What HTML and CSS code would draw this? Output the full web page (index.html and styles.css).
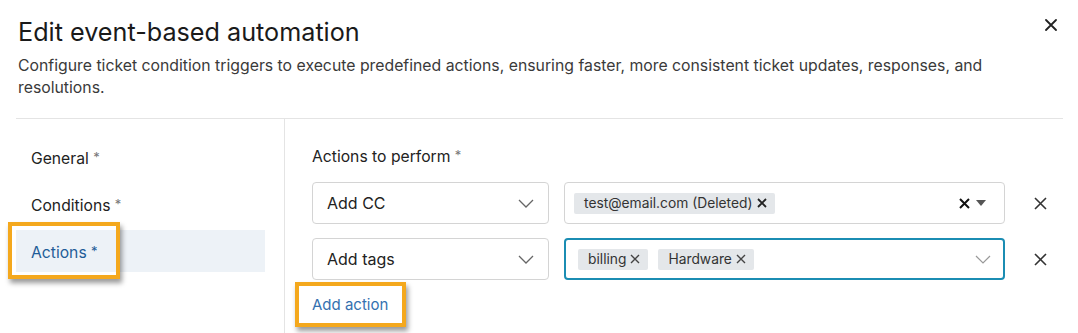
FILE: index.html
```html
<!DOCTYPE html>
<html lang="en">
<head>
    <meta charset="UTF-8">
    <meta name="viewport" content="width=device-width, initial-scale=1.0">
    <title>Edit event-based automation</title>
    <link rel="stylesheet" href="styles.css">
</head>
<body>
    <div class="modal">
        <div class="modal-header">
            <h1 class="modal-title">Edit event-based automation</h1>
            <button class="close-btn" aria-label="Close">
                <svg width="12" height="12" viewBox="0 0 12 12"><path d="M1 1L11 11M11 1L1 11" stroke="#222" stroke-width="1.8" stroke-linecap="round"/></svg>
            </button>
        </div>
        <p class="modal-desc">Configure ticket condition triggers to execute predefined actions, ensuring faster, more consistent ticket updates, responses, and resolutions.</p>

        <div class="modal-body">
            <nav class="sidebar">
                <div class="nav-item">General <span class="req">*</span></div>
                <div class="nav-item">Conditions <span class="req">*</span></div>
                <div class="nav-item active">
                    Actions <span class="req">*</span>
                    <span class="highlight"></span>
                </div>
            </nav>

            <section class="content">
                <div class="field-label">Actions to perform <span class="req">*</span></div>

                <div class="action-row">
                    <div class="select">
                        <span>Add CC</span>
                        <svg class="chevron" width="16" height="9" viewBox="0 0 16 9"><path d="M1 1L8 8L15 1" fill="none" stroke="#666" stroke-width="1.3"/></svg>
                    </div>
                    <div class="multi">
                        <div class="chips">
                            <span class="chip">test@email.com (Deleted)
                                <svg width="10" height="10" viewBox="0 0 10 10"><path d="M1 1L9 9M9 1L1 9" stroke="#222" stroke-width="1.8"/></svg>
                            </span>
                        </div>
                        <div class="multi-tools">
                            <svg width="11" height="11" viewBox="0 0 11 11"><path d="M1 1L10 10M10 1L1 10" stroke="#111" stroke-width="2"/></svg>
                            <svg width="10" height="6" viewBox="0 0 10 6"><path d="M0 0H10L5 6Z" fill="#555"/></svg>
                        </div>
                    </div>
                    <button class="remove-btn" aria-label="Remove">
                        <svg width="13" height="13" viewBox="0 0 13 13"><path d="M1 1L12 12M12 1L1 12" stroke="#333" stroke-width="1.6"/></svg>
                    </button>
                </div>

                <div class="action-row">
                    <div class="select">
                        <span>Add tags</span>
                        <svg class="chevron" width="16" height="9" viewBox="0 0 16 9"><path d="M1 1L8 8L15 1" fill="none" stroke="#666" stroke-width="1.3"/></svg>
                    </div>
                    <div class="multi focused">
                        <div class="chips">
                            <span class="chip">billing
                                <svg width="10" height="10" viewBox="0 0 10 10"><path d="M1 1L9 9M9 1L1 9" stroke="#444" stroke-width="1.4"/></svg>
                            </span>
                            <span class="chip">Hardware
                                <svg width="10" height="10" viewBox="0 0 10 10"><path d="M1 1L9 9M9 1L1 9" stroke="#444" stroke-width="1.4"/></svg>
                            </span>
                        </div>
                        <div class="multi-tools">
                            <svg width="16" height="9" viewBox="0 0 16 9"><path d="M1 1L8 8L15 1" fill="none" stroke="#999" stroke-width="1.2"/></svg>
                        </div>
                    </div>
                    <button class="remove-btn" aria-label="Remove">
                        <svg width="13" height="13" viewBox="0 0 13 13"><path d="M1 1L12 12M12 1L1 12" stroke="#333" stroke-width="1.6"/></svg>
                    </button>
                </div>

                <a class="add-link" href="#">Add action<span class="highlight"></span></a>
            </section>
        </div>
    </div>
</body>
</html>
```

FILE: styles.css
```css
body {
    margin: 0;
    font-family: Inter, "Noto Sans", sans-serif;
    background: #fff;
    color: #222;
}

.modal {
    padding: 0 15px 0 16px;
}

.modal-header {
    display: flex;
    justify-content: space-between;
    align-items: flex-start;
}

.modal-title {
    margin: 17px 0 0 2px;
    font-size: 25.2px;
    line-height: 30px;
    font-weight: 400;
    color: #1a1a1a;
}

.close-btn {
    margin: 19px 6px 0 0;
    padding: 0;
    border: none;
    background: none;
    line-height: 0;
}

.modal-desc {
    margin: 8px 0 0 2px;
    font-size: 15.8px;
    line-height: 22px;
    color: #3a3a3a;
    max-width: 985px;
}

.modal-body {
    display: flex;
    margin-top: 19px;
    border-top: 1px solid #e4e4e4;
    min-height: 214px;
}

.sidebar {
    width: 249px;
    padding: 17px 19px 0 0;
    border-right: 1px solid #e4e4e4;
    display: flex;
    flex-direction: column;
    gap: 5px;
}

.nav-item {
    position: relative;
    height: 42px;
    line-height: 42px;
    padding-left: 15px;
    font-size: 15.7px;
    color: #222;
}

.nav-item.active {
    background: #edf2f7;
    color: #1f5d98;
}

.req {
    color: #777;
    font-size: 13px;
    vertical-align: 2px;
}

.nav-item.active .req {
    color: #1f5d98;
}

.highlight {
    position: absolute;
    border: 4px solid #f4a81d;
    box-shadow: 2px 4px 5px rgba(0, 0, 0, 0.4);
    pointer-events: none;
}

.nav-item .highlight {
    left: -8px;
    top: -8px;
    width: 104px;
    height: 49px;
}

.content {
    flex: 1;
    padding: 25px 0 0 27px;
}

.field-label {
    font-size: 15.7px;
    line-height: 22px;
    margin-bottom: 14px;
    color: #222;
}

.action-row {
    display: flex;
    align-items: center;
    gap: 15px;
    margin-bottom: 14px;
}

.select {
    box-sizing: border-box;
    width: 237px;
    height: 42px;
    border: 1px solid #d4d4d4;
    border-radius: 4px;
    padding: 0 14px 0 14px;
    display: flex;
    align-items: center;
    justify-content: space-between;
    font-size: 16px;
    color: #222;
}

.multi {
    box-sizing: border-box;
    width: 441px;
    height: 42px;
    border: 1px solid #d4d4d4;
    border-radius: 4px;
    padding: 0 18px 0 9px;
    display: flex;
    align-items: center;
    justify-content: space-between;
}

.multi.focused {
    border: 2px solid #1b8db3;
    padding: 0 12px 0 12px;
}

.chips {
    display: flex;
    gap: 10px;
}

.chip {
    display: flex;
    align-items: center;
    gap: 4px;
    background: #e4e7ea;
    height: 21px;
    padding: 0 8px 0 10px;
    font-size: 13.8px;
    color: #333;
    border-radius: 2px;
}

.multi-tools {
    display: flex;
    align-items: center;
    gap: 6px;
}

.remove-btn {
    width: 40px;
    height: 40px;
    padding: 0;
    border: none;
    background: none;
    display: flex;
    align-items: center;
    justify-content: center;
}

.add-link {
    position: relative;
    display: inline-block;
    margin-top: -2px;
    font-size: 15px;
    line-height: 22px;
    color: #3471b0;
    text-decoration: none;
}

.add-link .highlight {
    left: -17px;
    top: -12px;
    width: 103px;
    height: 37px;
}
```
